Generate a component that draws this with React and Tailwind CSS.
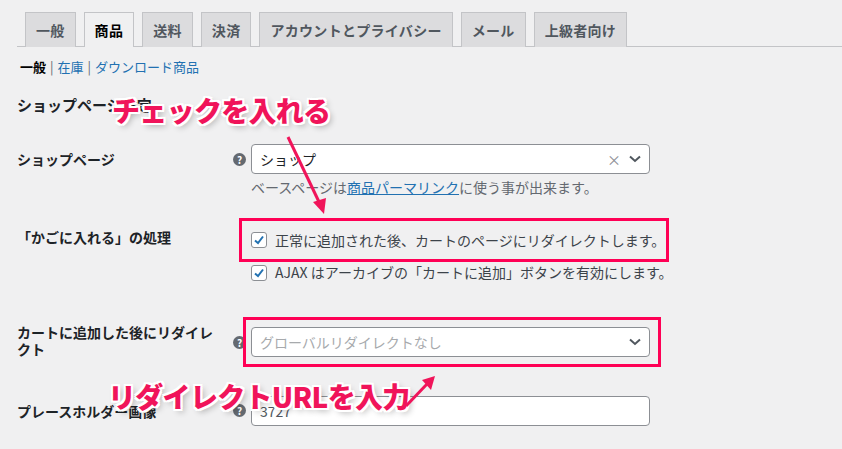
const F = { fontFamily: '"Noto Sans CJK JP", "Noto Sans", sans-serif' };

function Help() {
  return (
    <span className="w-[13px] h-[13px] rounded-full bg-[#646970] text-white text-[10px] font-bold flex items-center justify-center leading-none">?</span>
  );
}
function Check() {
  return (
    <span className="w-4 h-4 rounded-[3px] border border-[#8c8f94] bg-white flex items-center justify-center shrink-0">
      <svg width="12" height="12" viewBox="0 0 12 12"><path d="M2 6.5 L5 9 L10 2.5" stroke="#2271b1" strokeWidth="2" fill="none" /></svg>
    </span>
  );
}
function Chevron() {
  return <svg width="12" height="8" viewBox="0 0 12 8"><path d="M1 1.5 L6 6 L11 1.5" stroke="#50575e" strokeWidth="2" fill="none" /></svg>;
}

const tabs = ['一般', '商品', '送料', '決済', 'アカウントとプライバシー', 'メール', '上級者向け'];

export default function App() {
  return (
    <div className="relative w-[842px] h-[449px] overflow-hidden bg-[#f0f0f1] text-[#1d2327] text-[14px]" style={F}>
      <div className="flex gap-2 pl-[8px] pt-[12px] border-b border-[#c3c4c7] ml-[17px]">
        {tabs.map((t, i) => (
          <div key={t} className={`h-[35px] px-[10px] flex items-center border border-[#c3c4c7] border-b-0 text-[14px] font-semibold -mb-px tracking-[0.3px] ${i === 1 ? 'bg-[#f0f0f1] text-black' : 'bg-[#dcdcde] text-[#50575e]'}`}>{t}</div>
        ))}
      </div>
      <div className="pl-[20px] mt-[10px] text-[13px] flex gap-1">
        <span className="font-semibold text-black">一般</span>
        <span className="text-[#646970]">|</span><span className="text-[#2271b1]">在庫</span>
        <span className="text-[#646970]">|</span><span className="text-[#2271b1]">ダウンロード商品</span>
      </div>
      <div className="pl-[17px] mt-[17px] text-[15px] font-semibold text-[#1d2327]">ショップページ設定</div>

      <div className="flex pl-[17px] mt-[28px]">
        <div className="w-[216px] pt-[5px] font-semibold">ショップページ</div>
        <div className="pt-[9px]"><Help /></div>
        <div className="ml-[5px]">
          <div className="w-[399px] h-[30px] bg-white border border-[#8c8f94] rounded-[4px] flex items-center px-2 text-[14px]">
            <span className="flex-1">ショップ</span>
            <span className="text-[#8c8f94] mr-2 text-[14px]">×</span><Chevron />
          </div>
          <div className="mt-[3px] text-[14px] text-[#646970]">ベースページは<span className="text-[#2271b1] underline">商品パーマリンク</span>に使う事が出来ます。</div>
        </div>
      </div>

      <div className="flex pl-[17px] mt-[20px]">
        <div className="w-[222px] pt-[9px] font-semibold">「かごに入れる」の処理</div>
        <div>
          <div className="w-[430px] h-[44px] border-[3px] border-[#ff0055] flex items-center gap-[8px] pl-[9px] text-[#3c434a]"><Check />正常に追加された後、カートのページにリダイレクトします。</div>
          <div className="flex items-center gap-[8px] pl-[12px] mt-0 text-[#3c434a]"><Check />AJAX はアーカイブの「カートに追加」ボタンを有効にします。</div>
        </div>
      </div>

      <div className="flex pl-[17px] mt-[34px]">
        <div className="w-[216px] pt-[7px] font-semibold leading-[17px]">カートに追加した後にリダイレ<br />クト</div>
        <div className="pt-[19px]"><Help /></div>
        <div className="ml-[-3px] w-[418px] h-[50px] border-[3px] border-[#ff0055] flex items-center pl-[5px]">
          <div className="w-[399px] h-[30px] bg-white border border-[#8c8f94] rounded-[4px] flex items-center px-2 text-[14px] text-[#a7aaad]">
            <span className="flex-1">グローバルリダイレクトなし</span><Chevron />
          </div>
        </div>
      </div>

      <div className="flex pl-[17px] mt-[29px]">
        <div className="w-[216px] pt-[5px] font-semibold">プレースホルダー画像</div>
        <div className="pt-[8px]"><Help /></div>
        <div className="ml-[5px] w-[399px] h-[30px] bg-white border border-[#8c8f94] rounded-[4px] flex items-center px-2 text-[14px] text-[#50575e]">3727</div>
      </div>

      <div className="absolute left-[112px] top-[89px] text-[28px] font-black text-[#f0145a] tracking-tight" style={{ ...F, textShadow: '2px 0 #fff,-2px 0 #fff,0 2px #fff,0 -2px #fff,2px 2px #fff,-2px -2px #fff,2px -2px #fff,-2px 2px #fff,3px 3px 6px rgba(0,0,0,0.3)' }}>チェックを入れる</div>
      <div className="absolute left-[108px] top-[375px] text-[28px] font-black text-[#f0145a] tracking-tight" style={{ ...F, textShadow: '2px 0 #fff,-2px 0 #fff,0 2px #fff,0 -2px #fff,2px 2px #fff,-2px -2px #fff,2px -2px #fff,-2px 2px #fff,3px 3px 6px rgba(0,0,0,0.3)' }}>リダイレクトURLを入力</div>
      <svg className="absolute left-0 top-0" width="842" height="449">
        <line x1="288" y1="137" x2="320" y2="204" stroke="#f0145a" strokeWidth="3" />
        <polygon points="324,214 313,202 326,198" fill="#f0145a" />
        <line x1="406" y1="406" x2="428" y2="383" stroke="#f0145a" strokeWidth="3" />
        <polygon points="435,376 422,380 431,390" fill="#f0145a" />
      </svg>
    </div>
  );
}
